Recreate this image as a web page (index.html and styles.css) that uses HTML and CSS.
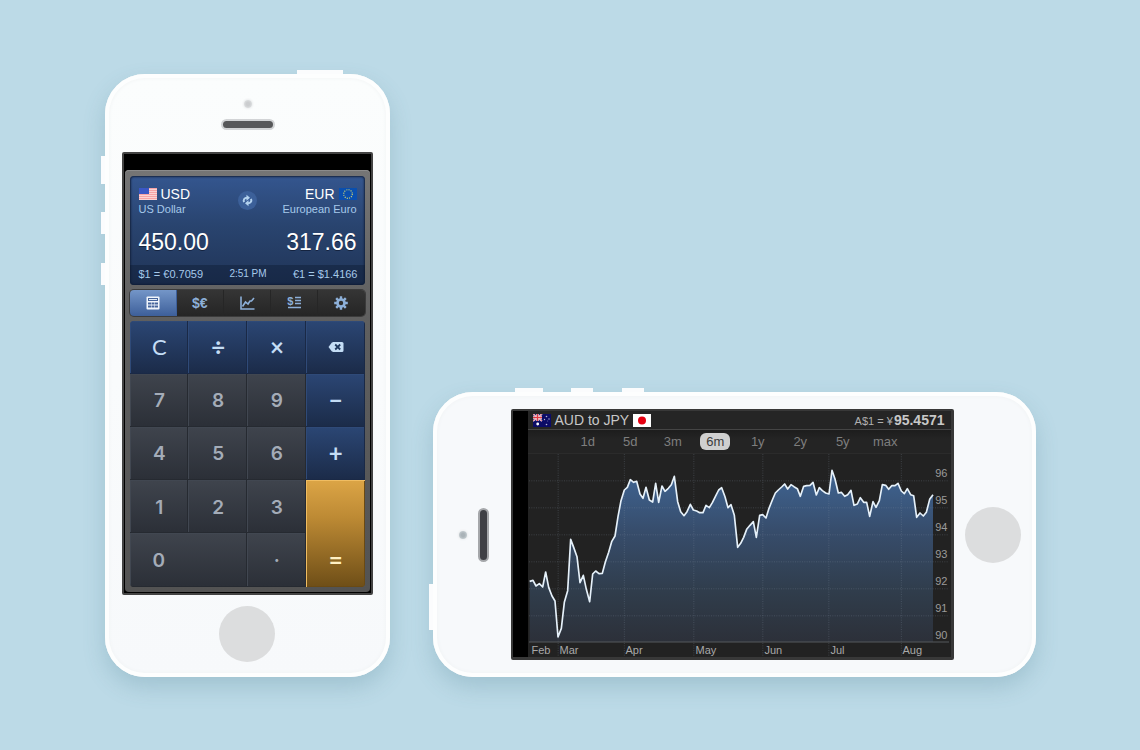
FILE: index.html
```html
<!DOCTYPE html>
<html lang="en">
<head>
<meta charset="utf-8">
<meta name="viewport" content="width=device-width, initial-scale=1">
<title>Currency Converter</title>
<link rel="stylesheet" href="styles.css">
</head>
<body>
<main class="stage">

  <section class="phone phone-tall" aria-label="Calculator">
    <span class="hw hw-power"></span>
    <span class="hw hw-a"></span><span class="hw hw-b"></span><span class="hw hw-c"></span>
    <div class="phone-head"><span class="camera"></span><span class="speaker"></span></div>
    <div class="screen">
      <div class="panel">
        <div class="display">
          <div class="currencies">
            <div class="currency">
              <div class="code">
                <svg class="flag" viewBox="0 0 18 12"><rect width="18" height="12" fill="#fbd3d3"/><path d="M0 .5h18M0 2.5h18M0 4.5h18M0 6.5h18M0 8.5h18M0 10.5h18" stroke="#f7a3a5"/><rect width="10" height="6" fill="#3a57c4"/></svg>
                <span>USD</span>
              </div>
              <div class="name">US Dollar</div>
              <div class="amount">450.00</div>
            </div>
            <button class="swap" aria-label="Swap currencies">
              <svg viewBox="0 0 19 19"><g fill="none" stroke="#b3d2ee" stroke-width="2"><path d="M6 11.200C5 8.500 6.500 6.800 9 6.800"/><path d="M13 7.800C14 10.500 12.500 12.200 10 12.200"/></g><path d="M8.500 3.800l3.500 3-3.500 3zM10.500 9.200l-3.500 3 3.500 3z" fill="#b3d2ee"/></svg>
            </button>
            <div class="currency currency-to">
              <div class="code">
                <span>EUR</span>
                <svg class="flag" viewBox="0 0 18 12"><rect width="18" height="12" fill="#0a4fae"/><circle cx="9" cy="6" r="4.300" fill="none" stroke="#c9cf73" stroke-width="1.200" stroke-dasharray="1.100 1.151"/></svg>
              </div>
              <div class="name">European Euro</div>
              <div class="amount">317.66</div>
            </div>
          </div>
          <div class="rates"><span>$1 = €0.7059</span><span class="time">2:51 PM</span><span>€1 = $1.4166</span></div>
        </div>

        <nav class="tabs" aria-label="Sections">
          <button class="tab tab-on" aria-label="Calculator">
            <svg viewBox="0 0 16 16"><rect x="1.500" y="1.500" width="13" height="13" rx="1" fill="#f1f6fc"/><g fill="#46659c"><rect x="3" y="3" width="10" height="3"/><rect x="3" y="7.500" width="3" height="2"/><rect x="6.500" y="7.500" width="3" height="2"/><rect x="10" y="7.500" width="3" height="2"/><rect x="3" y="10.500" width="3" height="2"/><rect x="6.500" y="10.500" width="3" height="2"/><rect x="10" y="10.500" width="3" height="2"/></g><rect x="4" y="4" width="8" height="1" fill="#dfe9f6"/></svg>
          </button>
          <button class="tab tab-text">$€</button>
          <button class="tab" aria-label="Chart">
            <svg viewBox="0 0 16 16" fill="none" stroke="#8db0d9"><path d="M2 1.500v12.500h13.500" stroke-width="1.600"/><path d="M3.500 11.500L6.500 7l2.500 2 2-3h1.500L15 3" stroke-width="1.600"/></svg>
          </button>
          <button class="tab" aria-label="Currency list"><span class="list-icon"><span>$</span><svg viewBox="0 0 14 13"><path d="M8 1.500h6M8 4.500h6M8 7.500h6M1 11.500h13" stroke="#8db0d9" stroke-width="1.600"/></svg></span></button>
          <button class="tab" aria-label="Settings">
            <svg viewBox="0 0 16 16" fill="none" stroke="#8db0d9"><circle cx="8" cy="8" r="3.500" stroke-width="2.600"/><path d="M8 1.200v3M8 11.800v3M1.200 8h3M11.800 8h3M3.200 3.200l2.100 2.100M10.700 10.700l2.100 2.100M3.200 12.800l2.100-2.100M10.700 5.300l2.100-2.100" stroke-width="2.400"/></svg>
          </button>
        </nav>

        <div class="keypad">
          <button class="key key-op key-clear">C</button>
          <button class="key key-op key-sign">÷</button>
          <button class="key key-op key-sign">×</button>
          <button class="key key-op" aria-label="Delete">
            <svg class="delete" viewBox="0 0 16 12"><path d="M5.500 1H14q1.500 0 1.500 1.500v7Q15.500 11 14 11H5.500Q4.500 11 3.700 10.200L.5 6l3.200-4.200Q4.500 1 5.500 1z" fill="#c4ddf5"/><path d="M7.200 3.500l5 5M12.200 3.500l-5 5" stroke="#20395f" stroke-width="1.800"/></svg>
          </button>
          <button class="key">7</button><button class="key">8</button><button class="key">9</button>
          <button class="key key-op key-sign">−</button>
          <button class="key">4</button><button class="key">5</button><button class="key">6</button>
          <button class="key key-op key-sign">+</button>
          <button class="key">1</button><button class="key">2</button><button class="key">3</button>
          <button class="key key-equals key-sign">=</button>
          <button class="key key-zero">0</button>
          <button class="key">·</button>
        </div>
      </div>
    </div>
    <div class="phone-foot"><span class="home"></span></div>
  </section>

  <section class="phone phone-wide" aria-label="Exchange rate chart">
    <span class="hw hw-power"></span>
    <span class="hw hw-a"></span><span class="hw hw-b"></span><span class="hw hw-c"></span>
    <div class="phone-head"><span class="camera"></span><span class="speaker"></span></div>
    <div class="screen">
      <div class="rate-app">
        <header class="rate-head">
          <h1 class="pair">
            <svg class="flag" viewBox="0 0 18 13"><rect width="18" height="13" fill="#0c0c66"/><path d="M0 0l9 7M9 0L0 7" stroke="#f3e6ee" stroke-width="1.600"/><path d="M0 0l9 7M9 0L0 7" stroke="#dd3d4a" stroke-width=".6"/><path d="M4.500 0v7M0 3.500h9" stroke="#fff" stroke-width="2.400"/><path d="M4.500 0v7M0 3.500h9" stroke="#e23a44" stroke-width="1.400"/><g fill="#fff"><circle cx="4.700" cy="10" r="1.400"/><g fill-opacity=".7"><circle cx="13.500" cy="2.500" r=".8"/><circle cx="11.500" cy="5.500" r=".7"/><circle cx="16" cy="5" r=".7"/><circle cx="13.500" cy="10.500" r=".8"/><circle cx="14.800" cy="7" r=".4"/></g></g></svg>
            <span>AUD to JPY</span>
            <svg class="flag" viewBox="0 0 18 13"><rect width="18" height="13" fill="#fff"/><circle cx="9" cy="6.500" r="4" fill="#e60012"/></svg>
          </h1>
          <p class="quote">A$1 = ¥ <strong>95.4571</strong></p>
        </header>
        <nav class="ranges" aria-label="Range">
          <button class="range">1d</button><button class="range">5d</button><button class="range">3m</button><button class="range range-on">6m</button><button class="range">1y</button><button class="range">2y</button><button class="range">5y</button><button class="range">max</button>
        </nav>
        <div class="chart">
          <svg class="plot" viewBox="9 -18 1269 609" preserveAspectRatio="none" aria-hidden="true">
            <defs><linearGradient id="area" x1="0" y1="30" x2="0" y2="546" gradientUnits="userSpaceOnUse"><stop offset="0" stop-color="#3f6594"/><stop offset=".35" stop-color="#374d6c"/><stop offset=".7" stop-color="#303d4c"/><stop offset="1" stop-color="#2c3039"/></linearGradient></defs>
            <path fill="url(#area)" d="M14 546V364L24 361 33 378 43 371 53 381 62 336 71 382 81 408 90 423 99 531 109 505 118 427 128 392 137 238 146 262 156 290 165 368 175 346 184 388 194 425 203 342 212 333 222 341 232 340 241 306 251 277 260 245 270 228 279 170 288 122 298 90 307 82 316 59 326 67 335 64 345 102 354 115 363 82 373 120 383 126 392 70 401 127 411 78 420 94 430 85 439 74 448 49 458 125 467 155 477 167 486 155 496 133 505 150 515 153 524 158 534 158 543 136 553 143 562 128 571 110 581 90 590 83 600 110 609 143 618 134 628 166 638 262 647 250 656 232 665 208 675 196 685 185 694 232 704 166 713 164 723 174 732 145 742 120 751 99 760 90 770 81 779 72 788 87 798 74 807 80 817 86 826 109 836 79 845 77 855 76 864 67 874 105 883 83 892 92 902 99 912 102 921 31 930 57 940 99 949 97 959 109 968 104 978 91 987 136 997 132 1006 113 1016 127 1025 127 1034 169 1044 125 1053 142 1063 122 1072 74 1082 76 1091 88 1100 77 1110 77 1119 70 1129 93 1138 101 1147 86 1157 104 1166 107 1175 172 1185 159 1195 168 1204 157 1214 118 1224 104V546z"/>
            <g class="grid"><path d="M12 62.500H1272M12 143.500H1272M12 224.500H1272M12 305.500H1272M12 386.500H1272M12 467.500H1272"/><path d="M99.500 -18V591M298 -18V591M506.500 -18V591M713.500 -18V591M911.500 -18V591M1129 -18V591"/></g>
            <path class="base" d="M12 546H1272"/>
            <path class="line" d="M14 364L24 361 33 378 43 371 53 381 62 336 71 382 81 408 90 423 99 531 109 505 118 427 128 392 137 238 146 262 156 290 165 368 175 346 184 388 194 425 203 342 212 333 222 341 232 340 241 306 251 277 260 245 270 228 279 170 288 122 298 90 307 82 316 59 326 67 335 64 345 102 354 115 363 82 373 120 383 126 392 70 401 127 411 78 420 94 430 85 439 74 448 49 458 125 467 155 477 167 486 155 496 133 505 150 515 153 524 158 534 158 543 136 553 143 562 128 571 110 581 90 590 83 600 110 609 143 618 134 628 166 638 262 647 250 656 232 665 208 675 196 685 185 694 232 704 166 713 164 723 174 732 145 742 120 751 99 760 90 770 81 779 72 788 87 798 74 807 80 817 86 826 109 836 79 845 77 855 76 864 67 874 105 883 83 892 92 902 99 912 102 921 31 930 57 940 99 949 97 959 109 968 104 978 91 987 136 997 132 1006 113 1016 127 1025 127 1034 169 1044 125 1053 142 1063 122 1072 74 1082 76 1091 88 1100 77 1110 77 1119 70 1129 93 1138 101 1147 86 1157 104 1166 107 1175 172 1185 159 1195 168 1204 157 1214 118 1224 104"/>
          </svg>
          <div class="values"><span>96</span><span>95</span><span>94</span><span>93</span><span>92</span><span>91</span><span>90</span></div>
          <div class="months"><span>Feb</span><span>Mar</span><span>Apr</span><span>May</span><span>Jun</span><span>Jul</span><span>Aug</span></div>
        </div>
      </div>
    </div>
    <div class="phone-foot"><span class="home"></span></div>
  </section>

</main>
</body>
</html>
```

FILE: styles.css
```css
* { box-sizing: border-box; }

body {
  margin: 0;
  background: #bcdae7;
  font-family: "Liberation Sans", Arial, sans-serif;
}

button {
  margin: 0;
  padding: 0;
  border: 0;
  background: none;
  font: inherit;
  color: inherit;
  cursor: pointer;
}

.stage {
  min-height: 100vh;
  display: flex;
  justify-content: center;
  align-items: center;
  gap: 43px;
}

/* Device bodies */
.phone {
  position: relative;
  display: flex;
  border-radius: 40px;
  background: linear-gradient(#fbfdfd, #f7f9fb);
  box-shadow:
    inset 0 0 0 4px #fdfefe,
    inset 0 0 5px 3px #eceff0,
    0 10px 22px rgba(70, 120, 140, .24);
}

.phone-tall {
  flex: 0 1 285px;
  flex-direction: column;
  padding: 0 17px 4px;
}

.phone-wide {
  flex: 0 1 603px;
  align-self: flex-end;
  margin-bottom: 73px;
  padding: 17px 4px 17px 0;
  background: #f7f9fb;
}

.hw { position: absolute; background: #fbfcfd; }

.phone-tall .hw { left: -4px; width: 4px; height: 22px; }
.phone-tall .hw-power { left: auto; right: 47px; top: -4px; width: 46px; height: 4px; }
.phone-tall .hw-a { top: 82px; height: 28px; }
.phone-tall .hw-b { top: 138px; }
.phone-tall .hw-c { top: 189px; }

.phone-wide .hw { top: -4px; width: 22px; height: 4px; }
.phone-wide .hw-power { left: -4px; top: auto; bottom: 47px; width: 4px; height: 46px; }
.phone-wide .hw-a { left: 82px; width: 28px; }
.phone-wide .hw-b { left: 138px; }
.phone-wide .hw-c { left: 189px; }

.phone-head, .phone-foot { display: flex; align-items: center; flex: none; }
.phone-head { gap: 11px; }
.phone-tall .phone-head { flex-direction: column; height: 78px; padding: 26px 0 0 1px; }
.phone-wide .phone-head { width: 78px; padding-left: 26px; }
.phone-foot { justify-content: center; }
.phone-tall .phone-foot { height: 78px; }
.phone-wide .phone-foot { width: 78px; }

.camera {
  width: 8px;
  height: 8px;
  border-radius: 50%;
  background: radial-gradient(#cbcdcf 30%, #e6e9ea);
  box-shadow: 0 0 2px 1px #eceeef;
}

.speaker {
  border: 2px solid #d2d4d6;
  border-radius: 6px;
  background: #57585a;
}
.phone-tall .speaker { width: 54px; height: 11px; }
.phone-wide .speaker { width: 11px; height: 54px; background: #3f4045; border-color: #a5a7aa; }
.phone-wide .camera { background: radial-gradient(#aab3b8 30%, #d5dcdf); }

.home { width: 56px; height: 56px; border-radius: 50%; background: #dcddde; }

.screen {
  border: 2px solid #434343;
  border-radius: 2px;
  background: #000;
}
.phone-tall .screen { padding: 16px 1px 1px; }
.phone-wide .screen { flex: 1; min-width: 0; display: flex; padding-left: 15px; border-color: #383838; border-width: 2px 3px 3px 2px; }

/* Calculator */
.panel {
  display: flex;
  flex-direction: column;
  gap: 5px;
  padding: 6px 5px 5px;
  border-radius: 4px;
  background: linear-gradient(#757575, #5f5f5f 35%, #535353);
  box-shadow: inset 0 1px #8b8b8b;
}

.display, .tabs, .keypad { border-radius: 4px; overflow: hidden; }

.display {
  background: linear-gradient(#34568f, #29446f 45%, #203457);
  box-shadow: inset 0 0 2px 1px #14233f;
  color: #fff;
}

.currencies {
  display: flex;
  justify-content: space-between;
  height: 89px;
  padding: 9px 8px 0 9px;
}

.currency { display: flex; flex-direction: column; flex: 1; }
.currency-to { align-items: flex-end; }

.code {
  display: flex;
  align-items: center;
  gap: 4px;
  font-size: 14px;
  line-height: 18px;
}

.flag { display: block; flex: none; width: 18px; height: 12px; }

.name { font-size: 11px; line-height: 12px; color: #a6c9ea; white-space: nowrap; }
.amount { margin-top: 13px; font-size: 23px; line-height: 28px; text-shadow: 0 1px #14233f; }

.swap {
  flex: none;
  align-self: flex-start;
  width: 19px;
  height: 19px;
  margin-top: 6px;
  border-radius: 50%;
  background: #3c6099;
}
.swap svg { display: block; }

.rates {
  display: flex;
  justify-content: space-between;
  align-items: center;
  height: 20px;
  padding: 0 7px 2px 9px;
  background: rgba(10, 20, 40, .35);
  color: #a6c9ea;
  font-size: 11px;
  white-space: nowrap;
}
.time { font-size: 10px; }

.tabs {
  display: flex;
  height: 26px;
  background: linear-gradient(#353535, #252525);
  box-shadow: 0 0 0 1px #3b3b3b;
}
.tab {
  flex: 1;
  display: flex;
  align-items: center;
  justify-content: center;
  border-right: 1px solid #262626;
  color: #8db0d9;
}
.tab:last-child { border-right: 0; }
.tab svg { width: 16px; height: 16px; }
.tab-on { background: linear-gradient(#7496c8, #3d5f9a); border-color: #3d5f9a; }
.tab-text { font-size: 14px; }
.tab-text, .list-icon { font-weight: bold; }
.list-icon { display: grid; width: 14px; height: 13px; font-size: 11px; line-height: 10px; text-align: left; }
.list-icon > * { grid-area: 1 / 1; }
.list-icon svg { width: 14px; height: 13px; }

.keypad {
  display: grid;
  grid-template-columns: repeat(4, 1fr);
  grid-template-rows: repeat(5, 1fr);
  height: 266px;
}

.key {
  display: flex;
  align-items: center;
  justify-content: center;
  padding: 2px 0 0 1px;
  background: linear-gradient(#3f444d, #2b2f37);
  box-shadow: inset -1px -1px #262a31, inset 1px 1px #414751;
  color: #a4acb8;
  font: 600 19px/24px Inter, sans-serif;
}
.key-op {
  padding-top: 0;
  background: linear-gradient(#2b4674, #1b2b48);
  box-shadow: inset -1px -1px #1a2946, inset 1px 1px #2f4a78;
  color: #c4ddf5;
}
.key-clear { font: 22px/24px Lato, sans-serif; }
.key-sign { font: bold 24px/24px Lato, sans-serif; }
.key-zero { grid-column: span 2; justify-content: flex-start; padding-left: 23px; }
.key-equals {
  grid-row: span 2;
  align-items: flex-end;
  padding-bottom: 15px;
  background: linear-gradient(#dca546, #bd8a34 35%, #6e4e17);
  box-shadow: inset 1px 1px #f0bd62, inset -1px -1px #6a4a14;
  color: #fff0c4;
}
.delete { width: 16px; height: 12px; }

/* Rate chart */
.rate-app {
  flex: 1;
  min-width: 0;
  display: flex;
  flex-direction: column;
  background: #222;
  color: #9b9b9b;
}

.rate-head {
  display: flex;
  justify-content: space-between;
  align-items: center;
  height: 19px;
  padding: 0 6px 0 5px;
  border-bottom: 1px solid #454545;
  background: #252525;
}

.pair {
  display: flex;
  align-items: center;
  gap: 4px;
  margin: 0;
  font-size: 14px;
  font-weight: normal;
  color: #c8c8c8;
}
.pair .flag { height: 13px; }

.quote { margin: 0; font-size: 11px; color: #b0b0b0; }
.quote strong { margin-left: -2px; font-size: 14px; color: #c8c8c8; }

.ranges {
  display: grid;
  grid-template-columns: repeat(8, 1fr);
  align-items: center;
  justify-items: center;
  height: 24px;
  padding: 0 44px 0 39px;
  border-bottom: 1px solid #2b2b2b;
  background: linear-gradient(#1d1d1d, #242424 40%);
}
.range { padding: 0 6px; border-radius: 6px; font-size: 13px; line-height: 17px; color: #7e7e7e; }
.range-on { background: #cfcfcf; color: #3c3c3c; }

.chart { flex: 1; display: grid; grid-template: 1fr / 1fr; min-height: 203px; font-size: 11px; }
.plot, .values, .months { grid-area: 1 / 1; }
.plot { width: 100%; height: 203px; display: block; }

.grid { fill: none; stroke: #8fa0b0; stroke-opacity: .25; stroke-width: 3; stroke-dasharray: 3 4; }
.base { stroke: #55595d; stroke-width: 3; }
.line { fill: none; stroke: #e6f1fa; stroke-width: 5; stroke-linejoin: round; }

.values {
  display: flex;
  flex-direction: column;
  justify-self: end;
  padding: 6px 3px 0 0;
  line-height: 27px;
}

.months {
  align-self: end;
  display: grid;
  grid-template-columns: 30fr 66fr 70fr 69fr 66fr 72fr 50fr;
  line-height: 14px;
  color: #a9a9a9;
}
.months span { min-width: 0; padding-left: 2px; }
.months span:first-child { padding-left: 4px; }
```
